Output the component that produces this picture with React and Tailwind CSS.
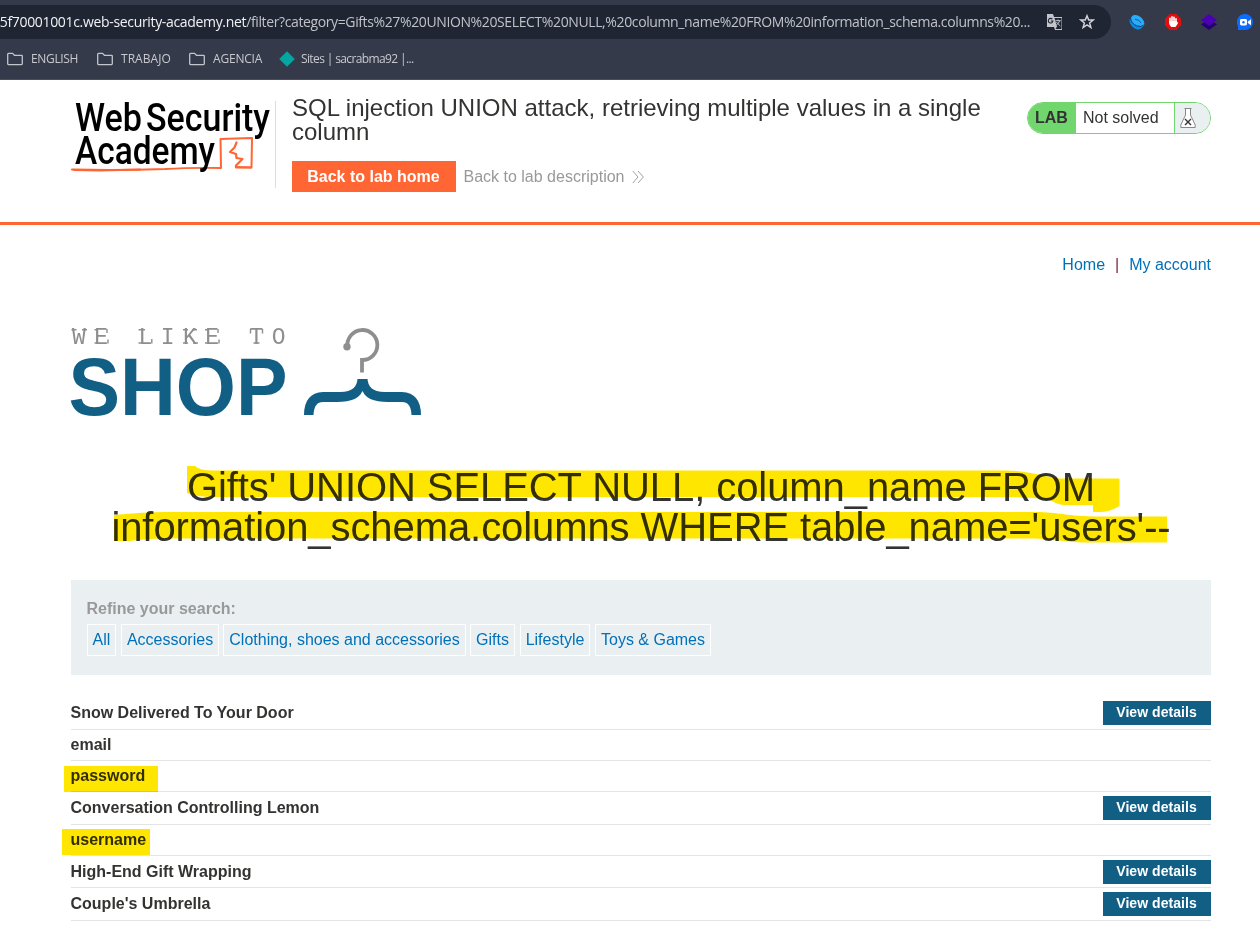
import React from "react";

function Folder() {
  return (
    <svg className="block h-4 w-4 shrink-0" viewBox="0 0 16 16" fill="none" stroke="#c3c5cb" strokeWidth="1.3" strokeLinejoin="round">
      <path d="M.7 3.2Q.7 2.4 1.5 2.4H5.6L7.4 4.3H14.5Q15.3 4.3 15.3 5.1V12.800Q15.3 13.6 14.5 13.6H1.5Q.7 13.6.7 12.800Z" />
    </svg>
  );
}

function Bookmark({ children, width }) {
  return (
    <div className={`flex h-5 items-center gap-2 ${width}`}>
      <Folder />
      <span className="whitespace-nowrap">{children}</span>
    </div>
  );
}

function BrowserChrome() {
  return (
    <div className="flex h-20 flex-col overflow-hidden border-b border-[#4b4e5b] bg-[#353a4b] pt-[5px] font-['Open_Sans','Noto_Sans',sans-serif]">
      <div className="flex h-[34px] items-center">
        <div className="flex h-[34px] w-[1111px] items-center rounded-r-full bg-[#1f2533]">
          <div className="flex h-full w-[1030px] items-center justify-end overflow-hidden whitespace-nowrap pb-px text-[14px] text-[#c0c2c7]">
            <span className="tracking-[-0.33px] text-[#f1f2f4]">25f70001001c.web-security-academy.net</span>
            <span className="tracking-[-0.38px]">/filter?category=Gifts%27%20UNION%20SELECT%20NULL,%20column_name%20FROM%20information_schema.columns%20...</span>
          </div>
          <svg className="ml-4 h-[18px] w-[17px] shrink-0" viewBox="0 0 17 18">
            <path d="M1 1H7L8 4H16V17H9L8 14H1Z" fill="#c3c5cb" />
            <path d="M8.5 5H15.5V16H9.5L11 13.5Z" fill="#1f2533" />
            <path d="M6.4 6.2A2.3 2.3 0 1 0 6.9 8H4.8" fill="none" stroke="#1f2533" strokeWidth="1.1" />
            <path d="M9.5 7.7H14.8M12 6.5V7.7M13.7 7.7Q13 10.5 10.3 12M10.4 9Q12 11 14.3 13" fill="none" stroke="#c3c5cb" />
          </svg>
          <svg className="ml-4 h-4 w-4 shrink-0" viewBox="0 0 16 16" fill="none" stroke="#d0d2d6" strokeWidth="1.5">
            <path d="M8 1.8 9.7 6H14.2L10.6 8.9 11.9 13.5 8 10.9 4.1 13.5 5.4 8.9 1.8 6H6.3Z" />
          </svg>
        </div>
        <svg className="ml-[18px] h-4 w-4 shrink-0" viewBox="0 0 16 16">
          <ellipse cx="7" cy="9" rx="5.2" ry="7.600" transform="rotate(-45 7 9)" fill="#0b8be0" />
          <ellipse cx="8.8" cy="7" rx="4.8" ry="7.500" transform="rotate(-50 8.8 7)" fill="#28adf8" />
          <path d="M1.2 3.5Q2 9.5 8 12Q12.5 13.5 14.5 11" fill="none" stroke="#153a70" strokeWidth="1" />
          <path d="M6 5.2Q10.5 5.6 12 9" fill="none" stroke="#0a5ba5" strokeWidth="1" />
        </svg>
        <svg className="ml-5 h-4 w-4 shrink-0" viewBox="0 0 16 16">
          <path d="M4.7 0H11.3L16 4.7V11.3L11.3 16H4.7L0 11.3V4.7Z" fill="#e40d0d" />
          <path d="M5 9V4.2M7 8V2.8M9 8V3.2M11 9V4.8" stroke="#fff" strokeWidth="1.6" strokeLinecap="round" />
          <path d="M4.2 7H11.8V9L13 7.8Q13.5 8.5 12.7 9.7L10.5 13H6.2Q4.2 11.5 4.2 9Z" fill="#fff" />
        </svg>
        <svg className="ml-5 h-4 w-4 shrink-0" viewBox="0 0 16 16">
          <path d="M0 10.3 3 8.5H13L16 10.3 8 16Z" fill="#25006f" />
          <path d="M8 0 16 6 8 12 0 6Z" fill="#4b00b5" />
        </svg>
        <svg className="ml-5 h-4 w-4 shrink-0" viewBox="0 0 16 16">
          <path d="M8 0A8 8 0 1 1 8 16H1V12A8 8 0 0 1 8 0Z" fill="#0b6cff" />
          <rect x="3" y="5" width="7" height="6.5" rx="1.4" fill="#fff" />
          <path d="M10.8 7.5 14 5.2V11.2L10.8 9Z" fill="#fff" />
          <circle cx="6.5" cy="8.2" r="1.2" fill="#0b6cff" />
        </svg>
      </div>
      <div className="flex h-10 items-center pl-[7px] text-[12px] text-[#c7c9ce]">
        <Bookmark width="w-[90px] tracking-[-0.35px]">ENGLISH</Bookmark>
        <Bookmark width="w-[92px] tracking-[0.05px]">TRABAJO</Bookmark>
        <Bookmark width="w-[90px] tracking-[-0.2px]">AGENCIA</Bookmark>
        <div className="flex items-center gap-[6px]">
          <svg className="h-4 w-4" viewBox="0 0 16 16"><path d="M8 .2 15.8 8 8 15.8.2 8Z" fill="#03a6a0" /></svg>
          <span className="whitespace-nowrap tracking-[-0.62px]">Sites | sacrabma92 |...</span>
        </div>
      </div>
    </div>
  );
}

function AcademyLogo() {
  return (
    <svg className="block h-[76px] w-[204px] overflow-visible" viewBox="71 100 204 76" fontFamily="Roboto, sans-serif" fontWeight="500" fontSize="38">
      <text x="75" y="129.800" textLength="67" lengthAdjust="spacingAndGlyphs">Web</text>
      <text x="146" y="129.800" textLength="124" lengthAdjust="spacingAndGlyphs">Security</text>
      <g fill="none" stroke="#ff6633" strokeLinejoin="round" strokeLinecap="round">
        <path d="M72 168.5Q120 169.5 165 168Q190 166.5 221 167L220.5 138L252 137L251.5 166.5L236 166" strokeWidth="2" />
        <path d="M74 169Q105 170 140 168.6" strokeWidth="2" />
        <path d="M236.5 141.5 234.5 146.5 230 151 236 153 236.5 157 242.5 158 236 164.5 236 166.5 251 166.5" strokeWidth="2.2" />
      </g>
      <text x="75" y="162.800" textLength="140" lengthAdjust="spacingAndGlyphs">Academy</text>
    </svg>
  );
}

function LabHeader() {
  return (
    <header className="flex h-[145px] border-b-[3px] border-[#ff6633] pl-[71px]">
      <div className="mt-[21px] h-[87px] w-[205px] border-r border-[#dcdddf]">
        <AcademyLogo />
      </div>
      <div className="ml-4 mt-4 w-[735px]">
        <h2 className="w-[720px] text-[24px] leading-6">SQL injection UNION attack, retrieving multiple values in a single column</h2>
        <div className="mt-[17px] flex items-center">
          <a className="flex h-[31px] w-[164px] items-center justify-center bg-[#ff6633] pr-px font-bold text-white">Back to lab home</a>
          <a className="ml-[7.500px] flex items-center text-[#999]">
            Back to lab description
            <svg className="ml-2 h-3 w-3" viewBox="0 0 12 12" fill="none" stroke="#a0a0a0"><path d="M.8 0 6 6 .8 12M6 0 11.4 6 6 12" /></svg>
          </a>
        </div>
      </div>
      <div className="mt-[22px] flex h-8 w-[184px] overflow-hidden rounded-full border border-[#72d66f] leading-[30px]">
        <span className="w-12 bg-[#72d66f] pl-[7px] font-bold">LAB</span>
        <span className="w-[99px] border-r border-[#72d66f] pl-[7px]">Not solved</span>
        <span className="flex-1 bg-[#eaeff2] pl-[5px] pt-[5px]">
          <svg className="block h-5 w-4" viewBox="0 0 16 20" fill="none" stroke="#888">
            <path d="M5.5.5V7L.8 17V19.5H15.2V17L10.5 7V.5Z" fill="#fff" />
            <path d="M4.5.5H11.5" />
            <path d="M5 11 11 17M11 11 5 17" stroke="#333" strokeWidth="1.4" />
          </svg>
        </span>
      </div>
    </header>
  );
}

function ShopLogo() {
  return (
    <svg className="block h-[92px] w-[352px] overflow-visible" viewBox="70 326 352 92">
      <text x="72" y="343.700" fontFamily="Liberation Mono, monospace" fontSize="23" letterSpacing="8.4" fill="#8e8e8e">WE LIKE TO</text>
      <path
        d="M71.500 329.700H76.500M82 329.700H87M94.500 329.700H98M94.500 343H98M107 329V333M108 339.500V343.500M138.500 329.700H145M138.500 343H142M151.800 339V343.500M183 329.700H188M183 343H188M192 329.700H197M193 343H198M205 329.700H209M205 343H209M218 329V333M219 339.500V343.500M250.500 329V333.500M262.500 329V333.500M253.500 343H259.500"
        stroke="#8e8e8e"
        strokeWidth="1.4"
      />
      <text x="68.500" y="414.8" fontFamily="Liberation Sans, sans-serif" fontWeight="700" fontSize="81" fill="#125f86" textLength="219" lengthAdjust="spacingAndGlyphs">SHOP</text>
      <path d="M347.5 347A15 15 0 1 1 362 360V372.500" fill="none" stroke="#8e8e8e" strokeWidth="3.8" />
      <circle cx="347" cy="346.8" r="3.7" fill="#8e8e8e" />
      <path d="M357.5 379H367.5C368 386 372 392 385 392H402Q421 393 421 415H411.500Q411 402 402 402C382 402 368 403 362.500 391C357 403 343 402 323 402Q314 402 313.500 415H304Q304 393 323 392H340C353 392 357 386 357.500 379Z" fill="#125f86" />
    </svg>
  );
}

function TitleHighlight() {
  return (
    <svg className="pointer-events-none absolute left-0 top-0 h-[90px] w-[1140px] mix-blend-multiply" viewBox="71 463 1140 90" fill="#ffe600">
      <path d="M187 466H195Q200 470.500 212 470.500H1005C1030 470.500 1045 477 1060 478.500H1119.500V506Q1110 512 1100 512H1093V505H1065Q1058 505 1050 500Q1035 497 1000 497H212Q200 497 190 494L187 493Z" />
      <path d="M114 515Q145 512 165 512H1035C1060 512 1065 516.500 1100 516.500H1167V542.500H1085C1065 542.500 1055 538.500 1025 538.500H165Q145 538.500 130 541H114Z" />
    </svg>
  );
}

const filters = [
  ["All", "w-[29px]", "mr-[5px]"],
  ["Accessories", "w-[98px]", "mr-1"],
  ["Clothing, shoes and accessories", "w-[243px]", "mr-1"],
  ["Gifts", "w-[45px]", "mr-[5px]"],
  ["Lifestyle", "w-[70px]", "mr-[5px]"],
  ["Toys & Games", "w-[116px]", ""],
];

const products = [
  { name: "Snow Delivered To Your Door", view: true, row: "h-[33px]" },
  { name: "email", row: "h-[31px]" },
  { name: "password", row: "h-[31px]", mark: "-left-[7px] top-[5px] h-[26px] w-[94px]" },
  { name: "Conversation Controlling Lemon", view: true, row: "h-[33px]" },
  { name: "username", row: "h-[31px]", mark: "-left-[9.5px] top-[3.5px] h-[26px] w-[88.5px]" },
  { name: "High-End Gift Wrapping", view: true, row: "h-[32px]" },
  { name: "Couple's Umbrella", view: true, row: "h-[33px]" },
];

function Product({ name, view, row, mark }) {
  return (
    <div className={`relative flex justify-between border-b border-[#e4e4e4] ${row}`}>
      <span className={`-ml-[0.5px] font-bold leading-6 ${view ? "pt-1" : "pt-[3px]"}`}>{name}</span>
      {view && <a className="mt-1 flex h-6 w-[108px] justify-center bg-[#125f86] pr-px text-[14px] font-bold leading-[23px] tracking-[0.05px] text-white">View details</a>}
      {mark && <span className={`absolute bg-[#ffe600] mix-blend-multiply ${mark}`} />}
    </div>
  );
}

export default function App() {
  return (
    <div className="h-[925px] w-[1260px] overflow-hidden bg-white font-['Liberation_Sans',Arial,sans-serif] text-base text-[#333332]">
      <BrowserChrome />
      <LabHeader />
      <main className="mx-auto ml-[71px] w-[1140px]">
        <nav className="flex h-[101px] justify-end pt-7 leading-6 text-[#0071b8]">
          <a>Home</a>
          <span className="mx-[10px] text-[#7b2545]">|</span>
          <a>My account</a>
        </nav>
        <div className="-ml-px h-[137px]"><ShopLogo /></div>
        <div className="relative h-[117px]">
          <h1 className="pt-1 text-center text-[40px] leading-10 tracking-[-0.08px]">
            Gifts' UNION SELECT NULL, column_name FROM<br />information_schema.columns WHERE table_name='users'--
          </h1>
          <TitleHighlight />
        </div>
        <section className="h-[95px] bg-[#eaeff2] pl-4 pt-[17px]">
          <div className="-ml-[0.5px] h-[27px] font-bold leading-6 text-[#999]">Refine your search:</div>
          <div className="flex">
            {filters.map(([label, width, margin]) => (
              <a key={label} className={`flex h-8 shrink-0 items-center justify-center whitespace-nowrap border border-white text-[#0071b8] ${width} ${margin}`}>{label}</a>
            ))}
          </div>
        </section>
        <section className="pt-[22px]">
          {products.map((product) => <Product key={product.name} {...product} />)}
        </section>
      </main>
    </div>
  );
}
